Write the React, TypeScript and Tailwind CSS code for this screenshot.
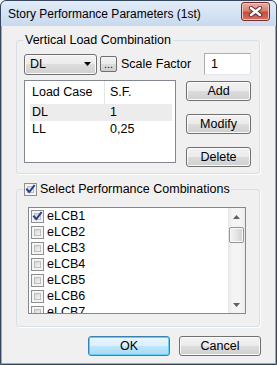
import React from "react";

const FONT = { fontFamily: '"Liberation Sans", Arial, sans-serif' };

function Check({ checked }: { checked?: boolean }) {
  return (
    <span className="relative inline-flex w-[13px] h-[13px] shrink-0 border border-[#8e8f8f] bg-[#f4f4f4] p-[2px]">
      <span className="block w-full h-full border border-[#bcc0c5] bg-[linear-gradient(135deg,#d3d6da,#f4f4f5)]" />
      {checked && (
        <svg className="absolute left-0 top-0" width="11" height="11" viewBox="0 0 11 11">
          <path d="M2 5.5 L4.3 8 L9 2" fill="none" stroke="#24408f" strokeWidth="2" strokeLinecap="square" />
        </svg>
      )}
    </span>
  );
}

function Btn({ children, className = "" }: { children: React.ReactNode; className?: string }) {
  return (
    <div
      className={
        "h-[20px] rounded-[3px] border border-[#707070] bg-[linear-gradient(to_bottom,#f2f2f2_0%,#ebebeb_50%,#dddddd_50%,#cfcfcf_100%)] shadow-[inset_0_0_0_1px_#fbfbfb] text-[12.5px] leading-none text-black flex items-center justify-center " +
        className
      }
    >
      {children}
    </div>
  );
}

export default function App() {
  const items = ["eLCB1", "eLCB2", "eLCB3", "eLCB4", "eLCB5", "eLCB6", "eLCB7"];
  return (
    <div style={FONT} className="w-[277px] h-[365px] bg-white">
      <div className="w-[277px] h-[365px] rounded-t-[6px] border border-[#34475c] bg-[#6eb6e6] p-[1px] flex flex-col overflow-hidden">
        {/* title bar */}
        <div className="h-[25px] -mx-[1px] -mt-[1px] px-[6px] rounded-t-[5px] bg-[linear-gradient(to_bottom,#e2ecf7,#c8d9ee)] flex items-center justify-between">
          <span className="text-[12px] text-black pt-[1px] pl-[1px]">Story Performance Parameters (1st)</span>
          <div className="w-[29px] h-[19px] -mt-[4px] rounded-[3px] border border-[#7a2a2a] bg-[linear-gradient(to_bottom,#eab0a6_0%,#d9806f_45%,#c44e3c_55%,#d9705e_100%)] shadow-[inset_0_0_0_1px_#f0c4bc] flex items-center justify-center">
            <svg width="15" height="11" viewBox="0 0 15 11">
              <path d="M3 2 L12 9 M12 2 L3 9" stroke="#5a2222" strokeWidth="4.2" strokeLinecap="round" />
              <path d="M3 2 L12 9 M12 2 L3 9" stroke="#ffffff" strokeWidth="2.6" strokeLinecap="round" />
            </svg>
          </div>
        </div>
        {/* client */}
        <div className="flex-1 bg-[#f0f0f0] flex flex-col text-[12.5px] text-black">
          {/* group 1 */}
          <fieldset className="ml-[14px] mt-[6px] w-[244px] h-[142px] rounded-[3px] border border-[#d5dfe5] shadow-[1px_1px_0_#ffffff] pl-[7px] pr-[8px]">
            <legend className="ml-[-1px] px-[2px] h-[16px] leading-[16px]">Vertical Load Combination</legend>
            <div className="mt-[5px] h-[22px] flex items-center">
              <div className="w-[73px] h-[21px] rounded-[3px] border border-[#707070] bg-[linear-gradient(to_bottom,#f2f2f2_0%,#ebebeb_50%,#dddddd_50%,#cfcfcf_100%)] shadow-[inset_0_0_0_1px_#fbfbfb] flex items-center justify-between pl-[5px] pr-[5px]">
                <span>DL</span>
                <svg width="7" height="4" viewBox="0 0 7 4">
                  <path d="M0 0 H7 L3.5 4 Z" fill="#000" />
                </svg>
              </div>
              <div className="ml-[3px] w-[17px] h-[16px] rounded-[2px] border border-[#707070] bg-[linear-gradient(to_bottom,#f2f2f2_0%,#ebebeb_50%,#dddddd_50%,#cfcfcf_100%)] flex items-end justify-center text-[11px] leading-[11px] pb-[1px]">
                ...
              </div>
              <span className="ml-[4px]">Scale Factor</span>
              <div className="ml-auto w-[47px] h-[22px] border border-[#abadb3] border-b-[#e3e9ef] border-r-[#dbdfe6] bg-white pl-[6px] flex items-center">
                1
              </div>
            </div>
            <div className="mt-[5px] flex items-start">
              <div className="w-[152px] h-[83px] border border-[#828790] bg-white flex flex-col">
                <div className="h-[23px] flex items-center">
                  <span className="w-[79px] pl-[7px]">Load Case</span>
                  <span className="w-px h-[23px] bg-[#e5e5e5]" />
                  <span className="pl-[5px]">S.F.</span>
                </div>
                <div className="ml-[5px] mr-[3px] h-[17px] bg-[#ececec] flex items-center">
                  <span className="w-[80px] pl-[2px]">DL</span>
                  <span>1</span>
                </div>
                <div className="ml-[5px] mr-[3px] h-[17px] flex items-center">
                  <span className="w-[80px] pl-[2px]">LL</span>
                  <span>0,25</span>
                </div>
              </div>
              <div className="ml-auto mt-[1px] w-[65px] flex flex-col gap-[13px]">
                <Btn>Add</Btn>
                <Btn>Modify</Btn>
                <Btn>Delete</Btn>
              </div>
            </div>
          </fieldset>
          {/* group 2 */}
          <fieldset className="ml-[14px] mt-[7px] w-[244px] h-[146px] rounded-[3px] border border-[#d5dfe5] shadow-[1px_1px_0_#ffffff] pl-[11px]">
            <legend className="ml-[-5px] px-[1px] h-[16px] flex items-center gap-[3px]">
              <Check checked />
              <span className="leading-[16px]">Select Performance Combinations</span>
            </legend>
            <div className="mt-[10px] w-[218px] h-[107px] border border-[#828790] bg-white flex overflow-hidden">
              <div className="flex-1 flex flex-col pl-[2px]">
                {items.map((it, i) => (
                  <div key={it} className="h-[16px] shrink-0 flex items-center gap-[3px]">
                    <Check checked={i === 0} />
                    <span className="leading-[16px]">{it}</span>
                  </div>
                ))}
              </div>
              <div className="w-[17px] h-full bg-[linear-gradient(to_right,#e6e6e6,#f4f4f4_25%,#f4f4f4_75%,#ebebeb)] flex flex-col">
                <div className="h-[17px] flex items-center justify-center">
                  <svg width="7" height="4" viewBox="0 0 7 4">
                    <path d="M0 4 H7 L3.5 0 Z" fill="#606060" />
                  </svg>
                </div>
                <div className="mt-[2px] mx-[1px] h-[16px] rounded-[2px] border border-[#959595] bg-[linear-gradient(to_right,#f4f4f4,#e4e4e4_50%,#d0d0d0)] shadow-[inset_0_0_0_1px_#fafafa]" />
                <div className="flex-1" />
                <div className="h-[17px] flex items-center justify-center">
                  <svg width="7" height="4" viewBox="0 0 7 4">
                    <path d="M0 0 H7 L3.5 4 Z" fill="#606060" />
                  </svg>
                </div>
              </div>
            </div>
          </fieldset>
          {/* bottom buttons */}
          <div className="mt-[9px] flex justify-end pr-[14px] gap-[9px]">
            <div className="w-[82px] h-[20px] rounded-[3px] border border-[#3c7fb1] bg-[linear-gradient(to_bottom,#eaf6fd_0%,#d9f0fc_50%,#bee6fd_50%,#a7d9f5_100%)] shadow-[inset_0_0_0_1px_#62d0f5] flex items-center justify-center leading-none">
              OK
            </div>
            <Btn className="w-[82px]">Cancel</Btn>
          </div>
        </div>
      </div>
    </div>
  );
}
